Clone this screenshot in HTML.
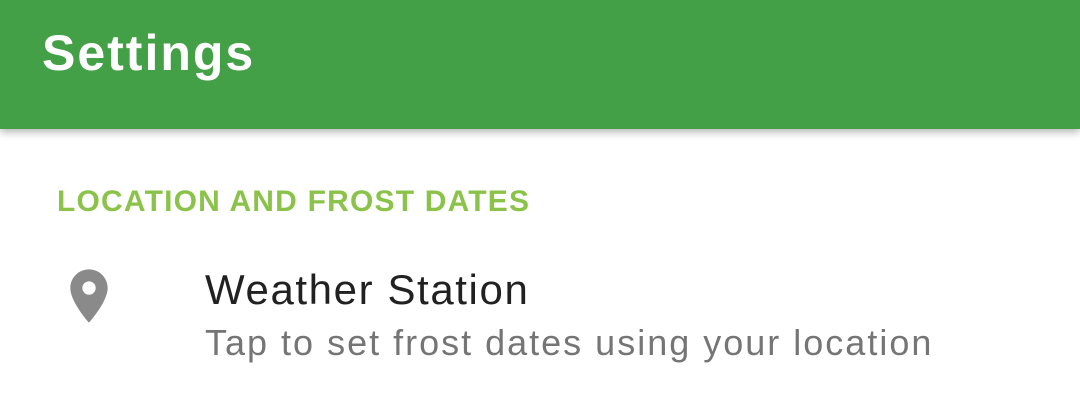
<!DOCTYPE html>
<html><head><style>
body{margin:0;width:1080px;height:418px;background:#fff;font-family:"Liberation Sans",sans-serif;position:relative;overflow:hidden}
.bar{position:absolute;left:0;top:0;width:1080px;height:129px;background:#43a047;box-shadow:0 3px 8px rgba(0,0,0,.3)}
.t{position:absolute;left:42px;top:24px;font-size:50px;color:#fff;font-weight:bold;letter-spacing:2px}
.h{position:absolute;left:57px;top:185px;font-size:30px;font-weight:bold;color:#8bc34a;letter-spacing:1.2px}
.a{position:absolute;left:205px;top:266px;font-size:42px;color:#212121;letter-spacing:1.6px}
.b{position:absolute;left:205px;top:322px;font-size:36px;color:#757575;letter-spacing:2px}
svg{position:absolute;left:57px;top:264px}
</style></head><body>
<div class="bar"><div class="t">Settings</div></div>
<div class="h">LOCATION AND FROST DATES</div>
<svg width="64" height="64" viewBox="0 0 24 24"><path fill="#8a8a8a" d="M12 2C8.13 2 5 5.13 5 9c0 5.25 7 13 7 13s7-7.75 7-13c0-3.870-3.13-7-7-7zm0 9.5a2.5 2.5 0 1 1 0-5 2.5 2.5 0 0 1 0 5z"/></svg>
<div class="a">Weather Station</div>
<div class="b">Tap to set frost dates using your location</div>
</body></html>
